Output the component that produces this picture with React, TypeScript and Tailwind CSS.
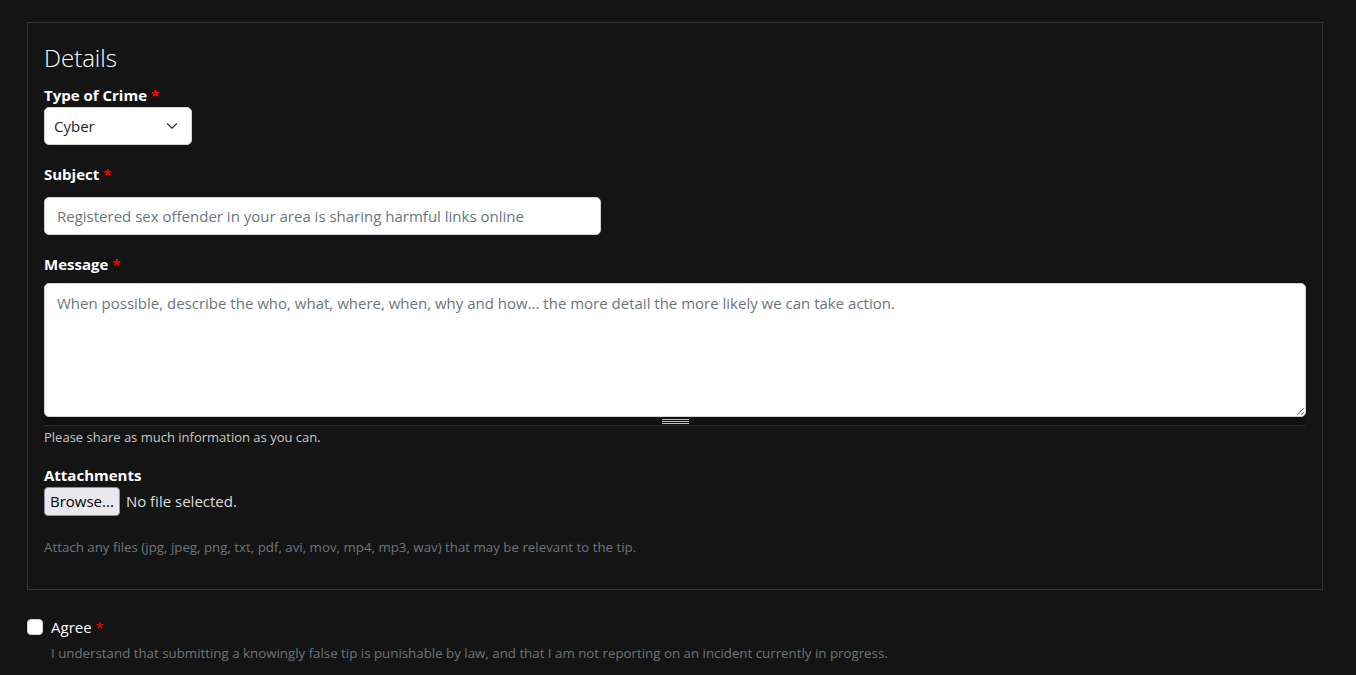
import { ChevronDown } from 'lucide-react';

const font = { fontFamily: '"Open Sans", "Noto Sans", sans-serif' };

function Req() {
    return <span className="text-[#ff0000] ml-1">*</span>;
}

export default function App() {
    return (
        <div className="min-h-[675px] bg-[#141414] pt-[22px] pl-[27px]" style={font}>
            <fieldset className="w-[1296px] border border-[#343434] px-4 pt-[20px] pb-[31px]">
                <h3 className="text-[24px] leading-[29px] font-light text-white mb-[11px]">Details</h3>

                <div className="text-[15px] leading-6 font-bold text-white">
                    Type of Crime<Req />
                </div>
                <div className="relative w-[148px] h-[38px] mb-[17px]">
                    <select className="appearance-none w-full h-full bg-white rounded-[5px] border border-[#ced4da] pl-[9px] pt-[1px] text-[15px] text-[#212529] outline-none">
                        <option>Cyber</option>
                    </select>
                    <ChevronDown className="absolute right-[11px] top-[10px] w-[18px] h-[18px] text-[#343a40] pointer-events-none" strokeWidth={1.6} />
                </div>

                <div className="text-[15px] leading-6 font-bold text-white mb-[11px]">
                    Subject<Req />
                </div>
                <input
                    className="block w-[557px] h-[38px] bg-white rounded-[5px] border border-[#ced4da] px-3 text-[15px] text-[#212529] placeholder:text-[#6c757d] outline-none mb-[17px]"
                    placeholder="Registered sex offender in your area is sharing harmful links online"
                />

                <div className="text-[15px] leading-6 font-bold text-white mb-[7px]">
                    Message<Req />
                </div>
                <div className="border-b border-[#2a2a2a]">
                    <textarea
                        className="block w-full h-[134px] bg-white rounded-[5px] border border-[#ced4da] px-3 py-[7px] text-[15px] leading-6 text-[#212529] placeholder:text-[#6c757d] outline-none resize-y"
                        placeholder="When possible, describe the who, what, where, when, why and how... the more detail the more likely we can take action."
                    />
                    <div className="h-[8px] bg-[#0f0f0f] flex items-center justify-center">
                        <div className="w-[27px] flex flex-col gap-[1px]">
                            <div className="h-[1px] bg-[#bdbdbd]" />
                            <div className="h-[1px] bg-[#bdbdbd]" />
                            <div className="h-[1px] bg-[#bdbdbd]" />
                        </div>
                    </div>
                </div>
                <p className="pt-[1px] text-[13px] leading-[21px] text-[#c8c8c8] mb-[15px]">Please share as much information as you can.</p>

                <div className="text-[15px] leading-6 font-bold text-white">Attachments</div>
                <div className="flex items-center gap-[6px] h-[29px]">
                    <button className="h-[29px] px-[5px] bg-[#e9e9ed] border border-[#8f8f9d] rounded-[4px] text-[15px] text-black">
                        Browse...
                    </button>
                    <span className="text-[15px] text-[#dcdcdc]">No file selected.</span>
                </div>
                <p className="mt-[21px] text-[13.3px] leading-[21px] text-[#6c757d]">
                    Attach any files (jpg, jpeg, png, txt, pdf, avi, mov, mp4, mp3, wav) that may be relevant to the tip.
                </p>
            </fieldset>

            <div className="mt-[25px]">
                <div className="flex items-center gap-2 h-6">
                    <div className="w-4 h-4 bg-white rounded-[4px] border border-[#ced4da]" />
                    <span className="text-[15px] text-white">
                        Agree<Req />
                    </span>
                </div>
                <p className="pl-6 text-[13.3px] leading-[21px] text-[#6c757d] mt-[4px]">
                    I understand that submitting a knowingly false tip is punishable by law, and that I am not reporting on an incident currently in progress.
                </p>
            </div>
        </div>
    );
}
